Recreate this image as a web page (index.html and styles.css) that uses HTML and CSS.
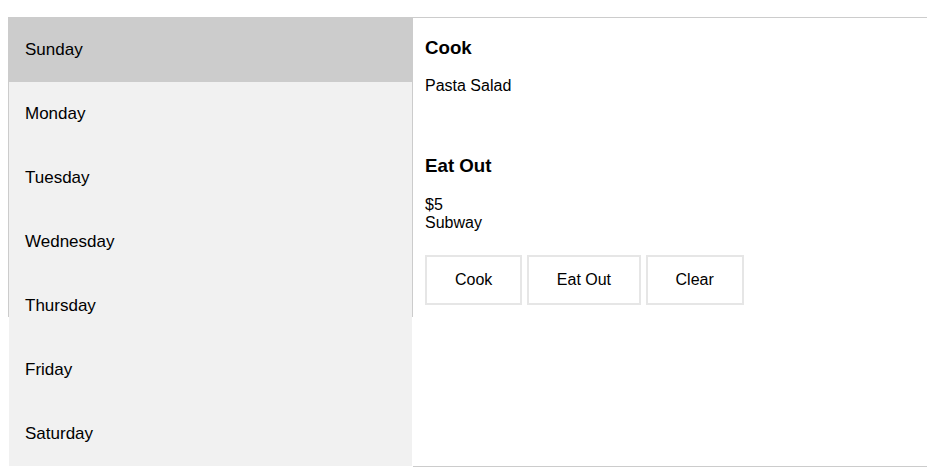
FILE: index.html
```html
<!DOCTYPE html>
<html>
<head>
<meta charset="utf-8">
<link rel="stylesheet" href="styles.css">
</head>
<body>
<div class="planner">
  <div class="tab">
    <button class="tablink active">Sunday</button>
    <button class="tablink">Monday</button>
    <button class="tablink">Tuesday</button>
    <button class="tablink">Wednesday</button>
    <button class="tablink">Thursday</button>
    <button class="tablink">Friday</button>
    <button class="tablink">Saturday</button>
  </div>
  <div class="tabcontent">
    <div class="meal">
      <h3>Cook</h3>
      <p>Pasta Salad</p>
    </div>
    <div class="meal eatout">
      <h3>Eat Out</h3>
      <p>$5<br>Subway</p>
    </div>
    <div class="actions">
      <button class="action">Cook</button>
      <button class="action">Eat Out</button>
      <button class="action">Clear</button>
    </div>
  </div>
</div>
</body>
</html>
```
FILE: styles.css
```css
body {
  margin: 8px 0 0 8px;
  font-family: "Liberation Sans", Arial, sans-serif;
  color: #000;
}
.planner {
  display: flex;
  align-items: flex-start;
  margin-top: 9px;
}
.tab {
  box-sizing: border-box;
  width: 405px;
  height: 300px;
  flex: none;
  border: 1px solid #ccc;
  background-color: #f1f1f1;
}
.tablink {
  display: block;
  width: 100%;
  margin: 0;
  padding: 22px 16px;
  border: none;
  outline: none;
  background-color: #f1f1f1;
  color: #000;
  text-align: left;
  font-family: "Liberation Sans", Arial, sans-serif;
  font-size: 17px;
  line-height: 20px;
  cursor: pointer;
}
.tablink.active {
  background-color: #ccc;
}
.tabcontent {
  box-sizing: border-box;
  flex: 1;
  height: 450px;
  padding: 0 12px;
  border-top: 1px solid #ccc;
  border-bottom: 1px solid #ccc;
}
.meal h3 {
  margin: 18.72px 0;
  font-size: 18.72px;
  font-weight: bold;
}
.meal p {
  margin: 16px 0;
  font-size: 16px;
}
.meal.eatout h3 {
  margin-top: 60px;
}
.actions {
  margin-top: 23px;
}
.action {
  display: inline-block;
  margin: 0;
  padding: 14px 28px;
  border: 2px solid #e6e6e6;
  background: #fff;
  color: #000;
  font-family: "Liberation Sans", Arial, sans-serif;
  font-size: 16px;
  line-height: 18px;
}
```
